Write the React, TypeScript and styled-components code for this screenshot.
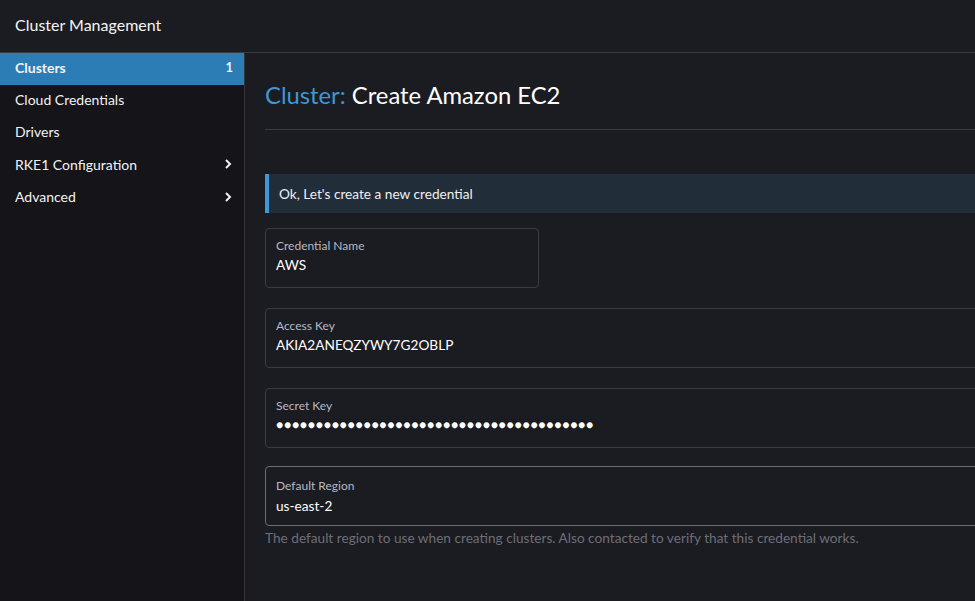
import React from "react";
import styled, { createGlobalStyle } from "styled-components";

const Global = createGlobalStyle`
  html, body { margin: 0; padding: 0; background: #1b1c21; }
  body { font-family: Lato, "Open Sans", sans-serif; color: #e6e6e6; }
  * { box-sizing: border-box; }
`;

const Page = styled.div`
  width: 975px;
  height: 601px;
  display: flex;
  flex-direction: column;
  overflow: hidden;
  background: #1b1c21;
`;

const Header = styled.header`
  height: 53px;
  flex: none;
  display: flex;
  align-items: center;
  padding: 0 15px 4px;
  background: #1b1c21;
  border-bottom: 1px solid #3a3b41;
  font-size: 16px;
  color: #f4f4f6;
`;

const Body = styled.div`
  flex: 1;
  display: flex;
  min-height: 0;
`;

const Sidebar = styled.nav`
  width: 245px;
  flex: none;
  background: #141419;
  border-right: 1px solid #34353b;
  display: flex;
  flex-direction: column;
`;

const NavItem = styled.div<{ $active?: boolean }>`
  height: 32.4px;
  display: flex;
  align-items: center;
  justify-content: space-between;
  padding: 0 11px 4px 15px;
  font-size: 14px;
  font-weight: ${(p) => (p.$active ? 700 : 400)};
  color: #f2f2f4;
  background: ${(p) => (p.$active ? "#2c7cb6" : "transparent")};
`;

const Count = styled.span`
  font-size: 13px;
  font-weight: 700;
`;

const Chevron = () => (
  <svg width="10" height="12" viewBox="0 0 10 12" style={{ display: "block" }}>
    <path d="M3 2 L7 6 L3 10" fill="none" stroke="#f2f2f4" strokeWidth="2" />
  </svg>
);

const Main = styled.main`
  flex: 1;
  padding: 0 0 0 20px;
  min-width: 0;
`;

const Title = styled.h1`
  margin: 0;
  padding: 28px 0 0;
  height: 77px;
  font-size: 23.8px;
  font-weight: 400;
  color: #ffffff;
  border-bottom: 1px solid #3b3c42;
`;

const Accent = styled.span`
  color: #3d98d3;
`;

const Banner = styled.div`
  margin-top: 44px;
  height: 39px;
  display: flex;
  align-items: center;
  padding-left: 10px;
  background: #222d3a;
  border-left: 4px solid #3d98d3;
  font-size: 13.65px;
  color: #f0f0f2;
`;

const Fields = styled.div`
  margin-top: 15px;
  display: flex;
  flex-direction: column;
  gap: 20px;
`;

const FieldBox = styled.div<{ $w?: number; $focus?: boolean }>`
  width: ${(p) => (p.$w ? `${p.$w}px` : "calc(100% + 10px)")};
  height: 60px;
  border-style: solid;
  border-color: ${(p) => (p.$focus ? "#6b6c76" : "#3b3c43")};
  border-width: ${(p) => (p.$focus ? "1.5px" : "1px")};
  border-radius: 4px;
  background: #1b1c21;
  padding: ${(p) => (p.$focus ? "11px 10px 0" : "9px 10px 0")};
`;

const Label = styled.div`
  font-size: 12px;
  color: #b8b9c2;
  line-height: 15px;
`;

const Value = styled.div<{ $dots?: boolean; $gap?: number }>`
  margin-top: ${(p) => (p.$gap ?? 3)}px;
  font-size: ${(p) => (p.$dots ? "12px" : "13.65px")};
  color: #ffffff;
  line-height: 18px;
  letter-spacing: ${(p) => (p.$dots ? "0.75px" : "0")};
`;

const Help = styled.div`
  margin-top: 4px;
  font-size: 13.65px;
  color: #6d6e78;
`;

const Group = styled.div`
  margin-top: -2px;
`;

export default function App() {
  return (
    <Page>
      <Global />
      <Header>Cluster Management</Header>
      <Body>
        <Sidebar>
          <NavItem $active>
            <span>Clusters</span>
            <Count>1</Count>
          </NavItem>
          <NavItem>Cloud Credentials</NavItem>
          <NavItem>Drivers</NavItem>
          <NavItem>
            <span>RKE1 Configuration</span>
            <Chevron />
          </NavItem>
          <NavItem>
            <span>Advanced</span>
            <Chevron />
          </NavItem>
        </Sidebar>
        <Main>
          <Title>
            <Accent>Cluster:</Accent> Create Amazon EC2
          </Title>
          <Banner>Ok, Let's create a new credential</Banner>
          <Fields>
            <FieldBox $w={274}>
              <Label>Credential Name</Label>
              <Value>AWS</Value>
            </FieldBox>
            <FieldBox>
              <Label>Access Key</Label>
              <Value>AKIA2ANEQZYWY7G2OBLP</Value>
            </FieldBox>
            <FieldBox>
              <Label>Secret Key</Label>
              <Value $dots>{"\u25CF".repeat(40)}</Value>
            </FieldBox>
            <Group>
              <FieldBox $focus>
                <Label>Default Region</Label>
                <Value $gap={4}>us-east-2</Value>
              </FieldBox>
              <Help>
                The default region to use when creating clusters. Also contacted to verify that this credential works.
              </Help>
            </Group>
          </Fields>
        </Main>
      </Body>
    </Page>
  );
}
